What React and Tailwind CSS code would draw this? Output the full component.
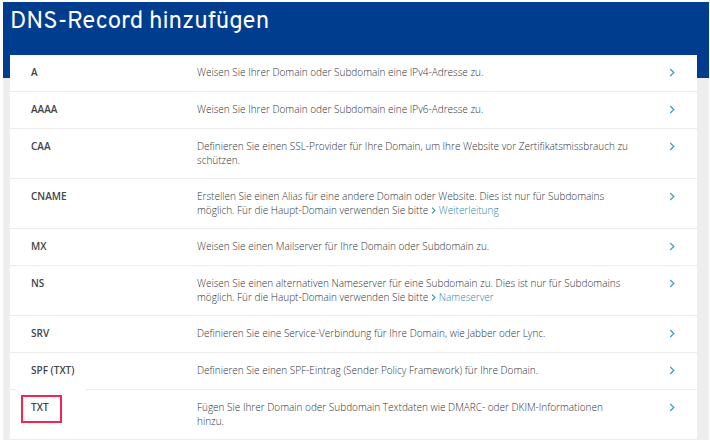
import React from 'react';

const records = [
  { type: 'A', text: 'Weisen Sie Ihrer Domain oder Subdomain eine IPv4-Adresse zu.' },
  { type: 'AAAA', text: 'Weisen Sie Ihrer Domain oder Subdomain eine IPv6-Adresse zu.' },
  {
    type: 'CAA',
    text: 'Definieren Sie einen SSL-Provider für Ihre Domain, um Ihre Website vor Zertifikatsmissbrauch zu schützen.',
  },
  {
    type: 'CNAME',
    text: 'Erstellen Sie einen Alias für eine andere Domain oder Website. Dies ist nur für Subdomains möglich. Für die Haupt-Domain verwenden Sie bitte',
    link: 'Weiterleitung',
  },
  { type: 'MX', text: 'Weisen Sie einen Mailserver für Ihre Domain oder Subdomain zu.' },
  {
    type: 'NS',
    text: 'Weisen Sie einen alternativen Nameserver für eine Subdomain zu. Dies ist nur für Subdomains möglich. Für die Haupt-Domain verwenden Sie bitte',
    link: 'Nameserver',
  },
  { type: 'SRV', text: 'Definieren Sie eine Service-Verbindung für Ihre Domain, wie Jabber oder Lync.' },
  { type: 'SPF (TXT)', text: 'Definieren Sie einen SPF-Eintrag (Sender Policy Framework) für Ihre Domain.' },
  {
    type: 'TXT',
    text: 'Fügen Sie Ihrer Domain oder Subdomain Textdaten wie DMARC- oder DKIM-Informationen hinzu.',
    marked: true,
  },
];

function Chevron({ className }) {
  return (
    <svg viewBox="0 0 6 10" fill="none" stroke="currentColor" className={className} aria-hidden="true">
      <path d="M1 1 L5 5 L1 9" strokeWidth="1.5" />
    </svg>
  );
}

function RecordRow({ type, text, link, marked }) {
  return (
    <tr>
      <th
        scope="row"
        className="relative h-[37px] border-b border-[#ececec] pt-[10px] pb-[11px] pl-[21px] text-left align-top font-semibold text-[#3f454a]"
      >
        {marked && (
          <span className="absolute -top-1 left-[6px] h-[52px] w-[70px] bg-white">
            <span className="absolute top-[9px] left-[5px] h-7 w-[41px] border-2 border-[#f8234f]" />
          </span>
        )}
        <span className="relative">{type}</span>
      </th>
      <td className="border-b border-[#ececec] pt-[10px] pb-[11px] align-top font-light text-[#2f3438]">
        <p className="max-w-[433px]">
          {text}
          {link && (
            <>
              {' '}
              <a href="#" className="whitespace-nowrap text-[#1f88b2]">
                <Chevron className="mr-[3px] inline-block h-[7px] w-[5px] align-baseline" />
                {link}
              </a>
            </>
          )}
        </p>
      </td>
      <td className="border-b border-[#ececec] pt-[10px] pr-[22px] pb-[11px] text-right align-top">
        <button type="button" aria-label={`${type} hinzufügen`} className="inline-flex h-[14px] items-center align-top text-[#4f9dbd]">
          <Chevron className="h-[9px] w-[6px]" />
        </button>
      </td>
    </tr>
  );
}

export default function App() {
  return (
    <main className="bg-white pt-[2px] pr-px pb-[5px] pl-[3px] font-['Open_Sans',sans-serif]">
      <div className="bg-[#eeeeee]">
        <header className="bg-[#003d8f] px-[7px] pt-[3px] pb-[39px]">
          <h1 className="font-['Overpass','Open_Sans',sans-serif] text-[24px] leading-[34px] text-white">
            DNS-Record hinzufügen
          </h1>
        </header>
        <div className="-mt-[23px] pr-3 pl-[7px]">
          <table className="w-full table-fixed border-separate border-spacing-0 bg-white text-[10px] leading-[14px]">
            <colgroup>
              <col className="w-[187px]" />
              <col />
              <col className="w-[50px]" />
            </colgroup>
            <tbody>
              {records.map((record) => (
                <RecordRow key={record.type} {...record} />
              ))}
            </tbody>
          </table>
        </div>
      </div>
    </main>
  );
}
